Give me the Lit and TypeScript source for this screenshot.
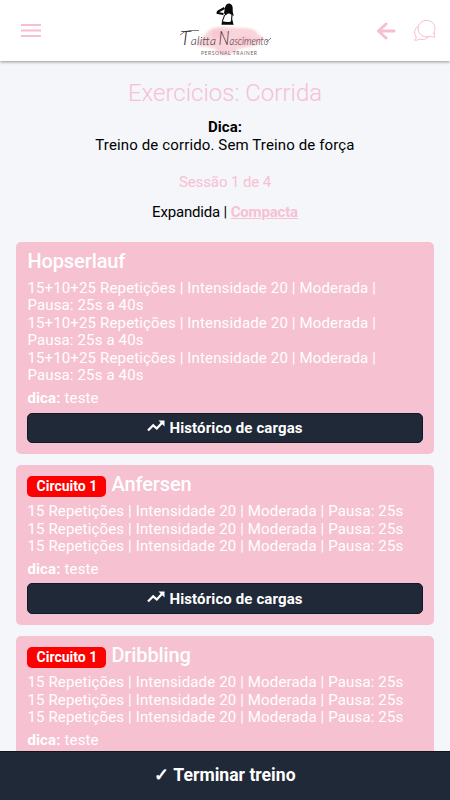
import { LitElement, html, css, svg, nothing } from "lit";
import { customElement, property } from "lit/decorators.js";

interface Exercise {
  name: string;
  circuit?: string;
  sets: string[][];
  tip: string;
}

const longSet = ["15+10+25 Repetições | Intensidade 20 | Moderada |", "Pausa: 25s a 40s"];
const shortSet = ["15 Repetições | Intensidade 20 | Moderada | Pausa: 25s"];

const exercises: Exercise[] = [
  { name: "Hopserlauf", sets: [longSet, longSet, longSet], tip: "teste" },
  { name: "Anfersen", circuit: "Circuito 1", sets: [shortSet, shortSet, shortSet], tip: "teste" },
  { name: "Dribbling", circuit: "Circuito 1", sets: [shortSet, shortSet, shortSet], tip: "teste" },
];

@customElement("brand-logo")
export class BrandLogo extends LitElement {
  static styles = css`
    :host { display: block; width: 110px; height: 61px; }
    svg { display: block; }
    .script { font: italic 300 12px Lato, "Liberation Serif", serif; fill: #30282c; }
    .cap { font-size: 20px; }
    .sub { font: 400 5px Lato, sans-serif; fill: #75636a; }
  `;
  render() {
    return html`<svg width="110" height="61" viewBox="0 0 110 61">
      ${svg`
      <defs><filter id="wash" x="-20%" y="-20%" width="140%" height="140%"><feGaussianBlur stdDeviation="1"/></filter></defs>
      <g filter="url(#wash)">
        <path d="M35 35 Q40 26 53 27 L72 28 Q85 27 88 34 L94 38 Q91 45 83 46 L68 49 Q60 58 49 54 L44 48 L28 46 Q24 41 32 39Z" fill="#fad4db"/>
        <path d="M42 31 Q52 27 61 32 Q54 38 42 39Z M65 39 Q75 34 83 39 Q79 45 66 44Z" fill="#f6bec9" opacity=".6"/>
      </g>
      <path d="M55 7.5 Q56 3.3 59.5 3.5 Q63 4.5 62.7 9 Q62.3 12 63.8 16 L61 14.5 Q59.5 13 58 13.5 L55.5 15.5 L54 13Z" fill="#090909"/>
      <path d="M54.5 8 L48.2 11.5 L47.5 13 L53.5 14" fill="none" stroke="#090909" stroke-width="2.2" stroke-linejoin="round"/>
      <path d="M54.5 15 Q53.8 18.5 52.3 21 M62 15 Q61 19 62.5 23" fill="none" stroke="#090909" stroke-width="1.1"/>
      <path d="M52 21 Q56 22.5 60.5 21.8 L61.5 19.5 L63.8 24.8 H51.5Z" fill="#090909"/>
      <path d="M10 35 Q14 31 20 30.5 L29 30.5 M96 42 Q98 41 101 38" fill="none" stroke="#41363b" stroke-width=".65"/>
      <text class="script" x="10" y="44.5" textLength="36" lengthAdjust="spacing"><tspan class="cap">T</tspan>alitta</text>
      <text class="script" x="48.5" y="44.5" textLength="50" lengthAdjust="spacingAndGlyphs"><tspan class="cap">N</tspan>ascimento</text>
      <text class="sub" x="31" y="55" textLength="56" lengthAdjust="spacing">PERSONAL TRAINER</text>`}
    </svg>`;
  }
}

@customElement("exercise-card")
export class ExerciseCard extends LitElement {
  @property({ attribute: false }) exercise!: Exercise;
  static styles = css`
    :host { display: block; box-sizing: border-box; padding: 9px 11px 11px; border-radius: 5px; background: #f6c2d2; color: #fff; }
    .head { display: flex; align-items: flex-start; gap: 5px; height: 28.7px; }
    .head.circuit { height: 29.2px; }
    .name { font-size: 20px; font-weight: 500; line-height: 21px; letter-spacing: -.1px; }
    .badge { box-sizing: border-box; width: 79px; height: 21px; margin-top: 2px; border-radius: 5px; background: #f00; font-size: 14px; font-weight: 700; line-height: 21px; text-align: center; }
    .sets, .tip { font-size: 15px; line-height: 17.55px; white-space: nowrap; letter-spacing: .15px; }
    .tip { margin: 5px 0; }
    .history { display: flex; align-items: center; justify-content: center; gap: 4px; box-sizing: border-box; width: 100%; height: 30.5px; padding: 0; border: 1px solid #10192a; border-radius: 5px; background: #202938; color: #fff; font: 700 15px Roboto, sans-serif; letter-spacing: .12px; }
    .history svg { margin-top: -3px; }
  `;
  render() {
    const { name, circuit, sets, tip } = this.exercise;
    return html`
      <div class=${circuit ? "head circuit" : "head"}>
        ${circuit ? html`<span class="badge">${circuit}</span>` : nothing}
        <span class="name">${name}</span>
      </div>
      <div class="sets">${sets.map((s) => s.map((line) => html`<div>${line}</div>`))}</div>
      <div class="tip"><b>dica:</b> ${tip}</div>
      <button class="history">
        <svg width="18" height="16" viewBox="0 0 18 16"><path d="M1 12.5 6.2 7.3 9.8 10.5 15.3 4.5" fill="none" stroke="#fff" stroke-width="2.3"/><path d="M11.5 2.5H17.5V8.5Z" fill="#fff"/></svg>
        Histórico de cargas
      </button>`;
  }
}

@customElement("app-root")
export class AppRoot extends LitElement {
  static styles = css`
    :host { display: flex; flex-direction: column; width: 450px; height: 800px; overflow: hidden; background: #f4f6fa; color: #000; font-family: Roboto, sans-serif; }
    header { flex: none; display: grid; grid-template-columns: 1fr 110px 1fr; height: 61px; background: #fff; box-shadow: 0 1px 3px rgba(0,0,0,.4); z-index: 1; }
    .left, .right { display: flex; align-items: center; }
    .left { padding-left: 21px; }
    .right { justify-content: flex-end; gap: 17px; padding-right: 13px; }
    main { flex: 1; min-height: 0; overflow: hidden; padding: 0 16px; font-size: 15px; line-height: 17.55px; text-align: center; }
    h1 { margin: 17px 0 11px; font-size: 24px; font-weight: 300; line-height: 30px; color: #f8c0d2; }
    p { margin: 0; }
    .intro { letter-spacing: .13px; }
    .session { margin-top: 20px; color: #f8c0d2; letter-spacing: -.1px; }
    .mode { margin-top: 12px; letter-spacing: -.17px; }
    .mode a { color: #f8c0d2; font-weight: 700; text-decoration: underline; }
    .list { display: flex; flex-direction: column; gap: 11px; margin-top: 20.8px; padding: 0 .3px 0 .4px; text-align: left; }
    footer { flex: none; display: flex; align-items: center; justify-content: center; box-sizing: border-box; height: 49.5px; padding-bottom: 2px; border-top: 1px solid #10151e; background: #202938; color: #fff; font-size: 17.6px; font-weight: 700; }
  `;
  render() {
    return html`
      <header>
        <div class="left"><svg width="20" height="15" viewBox="0 0 20 15"><path d="M0 2H20M0 7.5H20M0 13H20" stroke="#f6bfd1" stroke-width="2"/></svg></div>
        <brand-logo></brand-logo>
        <div class="right">
          <svg width="20" height="18" viewBox="0 0 20 18"><path d="M10 2 2.5 9 10 16M3 9H18" fill="none" stroke="#f6bfd1" stroke-width="3" stroke-linecap="round" stroke-linejoin="round"/></svg>
          <svg width="24" height="24" viewBox="0 0 24 24" fill="none" stroke="#f6bfd1" stroke-width="1"><path d="M20 15A8.5 8.3 0 1 0 17 17.2Q19.5 18.5 22 17.8Q21 16.8 21.3 13.5"/><path d="M5.2 7.2A7 7 0 0 0 3.3 18Q3 20 1.5 21.2Q4.3 21.6 6.2 20.3Q12 22 15.8 17.7"/></svg>
        </div>
      </header>
      <main>
        <h1>Exercícios: Corrida</h1>
        <p><b>Dica:</b></p>
        <p class="intro">Treino de corrido. Sem Treino de força</p>
        <p class="session">Sessão 1 de 4</p>
        <p class="mode">Expandida | <a>Compacta</a></p>
        <div class="list">${exercises.map((e) => html`<exercise-card .exercise=${e}></exercise-card>`)}</div>
      </main>
      <footer>✓ Terminar treino</footer>`;
  }
}
